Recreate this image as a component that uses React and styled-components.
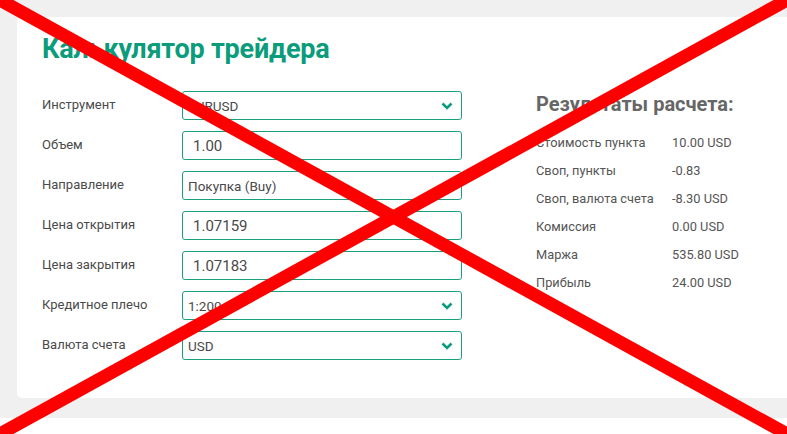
import React from "react";
import styled, { createGlobalStyle } from "styled-components";

const Global = createGlobalStyle`
  html, body { margin: 0; padding: 0; }
  body {
    background: #f0f0f0;
    font-family: Roboto, "Noto Sans", sans-serif;
    width: 787px;
    height: 434px;
    overflow: hidden;
  }
`;

const Page = styled.div`
  position: relative;
  width: 787px;
  height: 434px;
  overflow: hidden;
  padding-top: 17px;
  box-sizing: border-box;
`;

const Card = styled.div`
  margin-left: 17px;
  height: 381px;
  background: #fff;
  border-radius: 5px 0 0 5px;
  box-sizing: border-box;
  padding: 12px 0 0 25px;
`;

const Title = styled.h1`
  margin: 0;
  font-size: 27px;
  line-height: 40px;
  font-weight: 700;
  color: #0a9c7b;
  letter-spacing: -0.2px;
`;

const Body = styled.div`
  display: flex;
  margin-top: 22px;
  gap: 75px;
`;

const Form = styled.div`
  display: flex;
  flex-direction: column;
  gap: 11px;
  width: 420px;
`;

const Row = styled.div`
  display: grid;
  grid-template-columns: 140px 280px;
  align-items: center;
  height: 29px;
`;

const Label = styled.span`
  font-size: 13px;
  color: #4a4a4a;
  margin-top: -2px;
`;

const Field = styled.div`
  position: relative;
  height: 29px;
  border: 1px solid #1a9f7c;
  border-radius: 3px;
  box-sizing: border-box;
  display: flex;
  align-items: center;
  padding-left: ${(p) => (p.$select ? "5px" : "10px")};
  font-size: ${(p) => (p.$select ? "13.5px" : "15px")};
  color: #4a4a4a;
`;

const Chevron = styled.svg`
  position: absolute;
  right: 8px;
  top: 10px;
  width: 12px;
  height: 8px;
`;

const Results = styled.div`
  display: flex;
  flex-direction: column;
  margin-left: -1px;
`;

const ResHead = styled.h2`
  margin: 0;
  font-size: 20px;
  line-height: 26px;
  font-weight: 700;
  color: #666;
`;

const ResList = styled.div`
  display: flex;
  flex-direction: column;
  margin-top: 11px;
`;

const ResRow = styled.div`
  display: grid;
  grid-template-columns: 136px auto;
  height: 28px;
  align-items: center;
  font-size: 12.8px;
  color: #555;
`;

const Gap = styled.div`
  height: 20px;
`;

const Footer = styled.div`
  background: #fff;
  height: 40px;
`;

const Cross = styled.svg`
  position: absolute;
  left: 0;
  top: 0;
  width: 787px;
  height: 434px;
  pointer-events: none;
`;

const fields = [
  { label: "Инструмент", value: "EURUSD", select: true },
  { label: "Объем", value: "1.00" },
  { label: "Направление", value: "Покупка (Buy)", select: true },
  { label: "Цена открытия", value: "1.07159" },
  { label: "Цена закрытия", value: "1.07183" },
  { label: "Кредитное плечо", value: "1:200", select: true },
  { label: "Валюта счета", value: "USD", select: true },
];

const results = [
  ["Стоимость пункта", "10.00 USD"],
  ["Своп, пункты", "-0.83"],
  ["Своп, валюта счета", "-8.30 USD"],
  ["Комиссия", "0.00 USD"],
  ["Маржа", "535.80 USD"],
  ["Прибыль", "24.00 USD"],
];

export default function App() {
  return (
    <>
      <Global />
      <Page>
        <Card>
          <Title>Калькулятор трейдера</Title>
          <Body>
            <Form>
              {fields.map((f) => (
                <Row key={f.label}>
                  <Label>{f.label}</Label>
                  <Field $select={f.select}>
                    {f.value}
                    {f.select && (
                      <Chevron viewBox="0 0 12 8">
                        <polyline
                          points="1.5,1.5 6,6 10.5,1.5"
                          fill="none"
                          stroke="#0a9c7b"
                          strokeWidth="2.6"
                        />
                      </Chevron>
                    )}
                  </Field>
                </Row>
              ))}
            </Form>
            <Results>
              <ResHead>Результаты расчета:</ResHead>
              <ResList>
                {results.map(([k, v]) => (
                  <ResRow key={k}>
                    <span>{k}</span>
                    <span>{v}</span>
                  </ResRow>
                ))}
              </ResList>
            </Results>
          </Body>
        </Card>
        <Gap />
        <Footer />
        <Cross viewBox="0 0 787 434">
          <line x1="0" y1="0" x2="787" y2="434" stroke="#ff0000" strokeWidth="13" />
          <line x1="787" y1="0" x2="0" y2="434" stroke="#ff0000" strokeWidth="13" />
        </Cross>
      </Page>
    </>
  );
}
